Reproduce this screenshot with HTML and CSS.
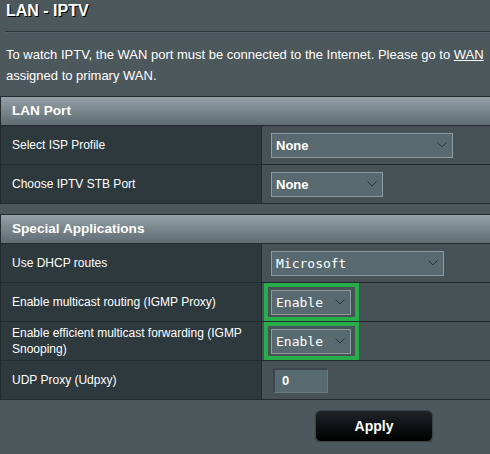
FILE: index.html
```html
<!DOCTYPE html>
<html>
<head>
<meta charset="utf-8">
<link rel="stylesheet" href="styles.css">
</head>
<body>
<div class="page">
  <h1 class="title">LAN - IPTV</h1>
  <div class="rule"></div>
  <p class="desc"><span class="line">To watch IPTV, the WAN port must be connected to the Internet. Please go to <u>WAN</u></span><span class="line">assigned to primary WAN.</span></p>

  <div class="form">
    <div class="head">LAN Port</div>
    <div class="row">
      <div class="label">Select ISP Profile</div>
      <div class="field"><div class="select w182"><span>None</span><svg class="chev" viewBox="0 0 10 6"><path d="M0.5 0.5 L5 5 L9.5 0.5"/></svg></div></div>
    </div>
    <div class="row">
      <div class="label">Choose IPTV STB Port</div>
      <div class="field"><div class="select w112"><span>None</span><svg class="chev" viewBox="0 0 10 6"><path d="M0.5 0.5 L5 5 L9.5 0.5"/></svg></div></div>
    </div>
  </div>

  <div class="form second">
    <div class="head">Special Applications</div>
    <div class="row">
      <div class="label">Use DHCP routes</div>
      <div class="field"><div class="select w173 mono"><span>Microsoft</span><svg class="chev" viewBox="0 0 10 6"><path d="M0.5 0.5 L5 5 L9.5 0.5"/></svg></div></div>
    </div>
    <div class="row">
      <div class="label">Enable multicast routing (IGMP Proxy)</div>
      <div class="field"><div class="select w80 mono"><span>Enable</span><svg class="chev" viewBox="0 0 10 6"><path d="M0.5 0.5 L5 5 L9.5 0.5"/></svg></div><div class="mark"></div></div>
    </div>
    <div class="row">
      <div class="label two">Enable efficient multicast forwarding (IGMP Snooping)</div>
      <div class="field"><div class="select w80 mono"><span>Enable</span><svg class="chev" viewBox="0 0 10 6"><path d="M0.5 0.5 L5 5 L9.5 0.5"/></svg></div><div class="mark"></div></div>
    </div>
    <div class="row">
      <div class="label">UDP Proxy (Udpxy)</div>
      <div class="field"><div class="input">0</div></div>
    </div>
  </div>

  <div class="actions">
    <button class="apply">Apply</button>
  </div>
</div>
</body>
</html>
```

FILE: styles.css
```css
html, body {
  margin: 0;
  padding: 0;
  background: #4d585d;
  overflow: hidden;
}
body {
  font-family: "Liberation Sans", Arial, sans-serif;
  color: #ffffff;
  font-size: 13px;
}
.page {
  width: 748px;
}
.title {
  margin: 0;
  padding: 1px 6px 0;
  font-size: 16px;
  line-height: 20px;
  font-weight: bold;
  color: #ffffff;
  text-shadow: 1px 1px 0 #000000;
}
.rule {
  margin: 10px 0 0 5px;
  height: 1px;
  background: #2c3437;
  border-bottom: 1px solid #56626a;
}
.desc {
  margin: 11px 0 0;
  padding: 0 6px;
  font-size: 13px;
  line-height: 21px;
  color: #ffffff;
}
.desc .line {
  display: block;
  white-space: nowrap;
}
.desc u {
  text-decoration: underline;
}
.form {
  margin-top: 10px;
  border: 1px solid #222a2d;
  border-right: none;
}
.form.second {
  margin-top: 10px;
}
.head {
  height: 28px;
  line-height: 28px;
  padding-left: 11px;
  font-weight: bold;
  font-size: 13.6px;
  color: #ffffff;
  background: linear-gradient(#93a1a6, #5f6c71);
  border-bottom: 1px solid #222a2d;
}
.row {
  display: grid;
  grid-template-columns: 261px 1fr;
  border-bottom: 1px solid #222a2d;
}
.row:last-child {
  border-bottom: none;
}
.label {
  background: #2e393d;
  border-right: 1px solid #222a2d;
  height: 38px;
  display: flex;
  align-items: center;
  padding: 0 4px 0 11px;
  color: #ffffff;
  font-size: 12px;
  line-height: 16px;
}
.field {
  position: relative;
  background: #475257;
  display: flex;
  align-items: center;
  padding-left: 9px;
  height: 38px;
}
.select {
  position: relative;
  box-sizing: border-box;
  height: 25px;
  border: 1px solid #8d9b9f;
  background: #586a6f;
  display: flex;
  align-items: center;
  padding-left: 4px;
  font-weight: bold;
  font-size: 13px;
  color: #ffffff;
}
.select.mono {
  font-family: "DejaVu Sans Mono", monospace;
  font-weight: normal;
  font-size: 13px;
}
.w182 { width: 182px; }
.w112 { width: 112px; }
.w173 { width: 173px; }
.w80 { width: 80px; }
.chev {
  position: absolute;
  right: 5px;
  top: 8px;
  width: 10px;
  height: 6px;
  fill: none;
  stroke: #2c3538;
  stroke-width: 1;
}
.mark {
  position: absolute;
  left: 2px;
  top: 0;
  width: 95px;
  height: 38px;
  box-sizing: border-box;
  border: 4px solid #27ae4b;
}
.input {
  box-sizing: border-box;
  margin-left: 2px;
  width: 55px;
  height: 25px;
  background: #566a70;
  border-top: 2px solid #3b474b;
  border-left: 2px solid #3b474b;
  border-right: 1px solid #6a7a7f;
  border-bottom: 1px solid #6a7a7f;
  padding-left: 7px;
  line-height: 22px;
  font-weight: bold;
  font-size: 13px;
}
.actions {
  display: flex;
  justify-content: center;
  padding-top: 10px;
}
.apply {
  width: 118px;
  height: 32px;
  border-radius: 6px;
  border: 1px solid #3a4447;
  background: linear-gradient(#1d2427, #000000);
  color: #ffffff;
  font-family: "Liberation Sans", Arial, sans-serif;
  font-weight: bold;
  font-size: 14px;
  box-shadow: 0 1px 1px rgba(0,0,0,0.4);
}
```
